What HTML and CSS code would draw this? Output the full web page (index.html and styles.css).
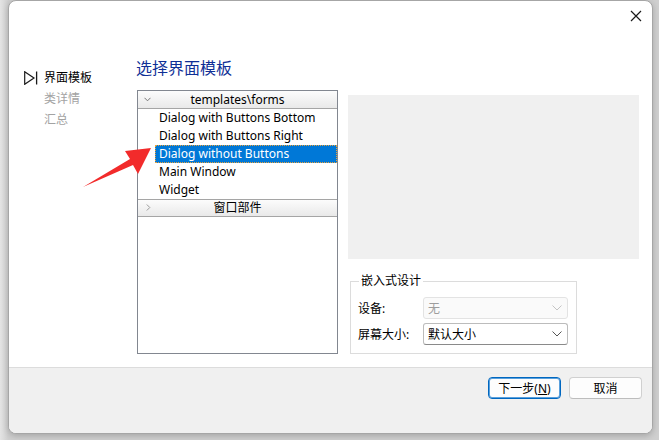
FILE: index.html
```html
<!DOCTYPE html>
<html lang="zh-CN">
<head>
  <meta charset="utf-8">
  <title>新建窗体</title>
  <link rel="stylesheet" href="styles.css">
</head>
<body>
  <div class="window">
    <div class="titlebar">
      <svg class="close" width="12" height="12" viewBox="0 0 12 12">
        <path d="M1 1 L11 11 M11 1 L1 11" stroke="#1a1a1a" stroke-width="1.2" fill="none"/>
      </svg>
    </div>

    <div class="main">
      <div class="nav">
        <div class="nav-item current">
          <svg width="14" height="14" viewBox="0 0 14 14">
            <path d="M0.7 0.7 L10 7 L0.7 13.3 Z" stroke="#1a1a1a" stroke-width="1.2" fill="none"/>
            <path d="M12.6 0.5 V13.5" stroke="#1a1a1a" stroke-width="1.3"/>
          </svg>
          <span>界面模板</span>
        </div>
        <div class="nav-item">类详情</div>
        <div class="nav-item">汇总</div>
      </div>

      <div class="page">
        <h1 class="page-title">选择界面模板</h1>
        <div class="content">
          <div class="tree">
            <div class="tree-header">
              <svg class="chev" width="7" height="5" viewBox="0 0 7 5"><path d="M0.5 0.8 L3.5 3.8 L6.5 0.8" stroke="#777" fill="none"/></svg>
              <span>templates\forms</span>
            </div>
            <div class="tree-item">Dialog with Buttons Bottom</div>
            <div class="tree-item">Dialog with Buttons Right</div>
            <div class="tree-item selected">Dialog without Buttons</div>
            <div class="tree-item">Main Window</div>
            <div class="tree-item">Widget</div>
            <div class="tree-header second">
              <svg class="chev" width="5" height="7" viewBox="0 0 5 7"><path d="M0.8 0.5 L3.8 3.5 L0.8 6.5" stroke="#999" fill="none"/></svg>
              <span>窗口部件</span>
            </div>
          </div>

          <div class="side">
            <div class="preview"></div>
            <div class="group">
              <div class="group-title">嵌入式设计</div>
              <div class="form-row">
                <span class="label">设备:</span>
                <div class="combo disabled">
                  <span>无</span>
                  <svg width="10" height="6" viewBox="0 0 10 6"><path d="M0.5 0.5 L5 5 L9.5 0.5" stroke="#c4c4c4" fill="none"/></svg>
                </div>
              </div>
              <div class="form-row">
                <span class="label">屏幕大小:</span>
                <div class="combo">
                  <span>默认大小</span>
                  <svg width="10" height="6" viewBox="0 0 10 6"><path d="M0.5 0.5 L5 5 L9.5 0.5" stroke="#555" fill="none"/></svg>
                </div>
              </div>
            </div>
          </div>
        </div>
      </div>
    </div>

    <div class="footer">
      <button class="btn default">下一步(<u>N</u>)</button>
      <button class="btn">取消</button>
    </div>

    <!-- annotation arrow pointing at the selected template -->
    <svg class="arrow" width="659" height="440" viewBox="0 0 659 440">
      <polygon points="74,186 121,158 116,150 142,147 129,173 124,164" fill="#f22b2b"/>
    </svg>
  </div>
</body>
</html>
```

FILE: styles.css
```css
body {
  margin: 0;
  height: 440px;
  overflow: hidden;
  background: linear-gradient(to right, #e4e4e4, #cfcfcf 8px, #cfcfcf);
  font-family: "Noto Sans", "Noto Sans CJK SC", sans-serif;
  font-size: 12px;
  color: #000;
}

.window {
  position: relative;
  box-sizing: border-box;
  width: 645px;
  height: 434px;
  margin-left: 8px;
  background: #fff;
  border: 1px solid #a6a6a6;
  border-radius: 8px;
  box-shadow: 0 2px 6px rgba(0, 0, 0, 0.2);
  display: flex;
  flex-direction: column;
  overflow: hidden;
}

.titlebar {
  height: 29px;
  display: flex;
  justify-content: flex-end;
  align-items: flex-start;
}

.close {
  margin: 9px 10px 0 0;
}

.main {
  display: flex;
  height: 337px;
}

.nav {
  width: 127px;
  flex: none;
  padding: 37px 0 0 15px;
  box-sizing: border-box;
}

.nav-item {
  height: 21px;
  line-height: 21px;
  padding-left: 20px;
  color: #a3a3a3;
}

.nav-item.current {
  display: flex;
  align-items: center;
  gap: 6px;
  padding-left: 0;
  color: #000;
}

.page {
  flex: 1;
}

.page-title {
  margin: 27px 0 0 0;
  height: 22px;
  line-height: 22px;
  font-size: 16px;
  font-weight: normal;
  color: #0f2f96;
}

.content {
  display: flex;
  margin-top: 11px;
  margin-left: 1px;
}

.tree {
  box-sizing: border-box;
  flex: none;
  width: 201px;
  height: 264px;
  border: 1px solid #828790;
}

.tree-header {
  position: relative;
  height: 17px;
  line-height: 17px;
  text-align: center;
  background: linear-gradient(#fcfcfc, #e9e9e9);
  border-bottom: 1px solid #a5a5a5;
}

.tree-header.second {
  border-top: 1px solid #a5a5a5;
  height: 16px;
  line-height: 16px;
}

.chev {
  position: absolute;
  left: 6px;
  top: 6px;
}

.tree-header.second .chev {
  left: 8px;
  top: 4px;
}

.tree-item {
  box-sizing: border-box;
  height: 18px;
  line-height: 16px;
  margin-left: 17px;
  padding-left: 3px;
  border: 1px solid transparent;
  white-space: nowrap;
}

.tree-item.selected {
  background: #0078d7;
  color: #fff;
  border: 1px dotted #e9a23b;
}

.side {
  margin-left: 10px;
}

.preview {
  width: 291px;
  height: 164px;
  margin-top: 5px;
  background: #f0f0f0;
}

.group {
  position: relative;
  box-sizing: border-box;
  width: 227px;
  height: 73px;
  margin: 22px 0 0 2px;
  padding: 15px 8px 0 7px;
  border: 1px solid #dcdcdc;
}

.group-title {
  position: absolute;
  top: -10px;
  left: 8px;
  padding: 0 2px;
  background: #fff;
  line-height: 18px;
}

.form-row {
  display: flex;
  align-items: center;
  margin-bottom: 4px;
}

.label {
  width: 65px;
}

.combo {
  box-sizing: border-box;
  width: 145px;
  height: 22px;
  display: flex;
  align-items: center;
  justify-content: space-between;
  padding: 0 5px 0 4px;
  background: #fff;
  border: 1px solid #bcbcbc;
  border-bottom-color: #8a8a8a;
  border-radius: 3px;
}

.combo.disabled {
  background: #fafafa;
  border-color: #e3e3e3;
  color: #9d9d9d;
}

.footer {
  flex: 1;
  display: flex;
  justify-content: flex-end;
  align-items: flex-start;
  gap: 8px;
  padding: 9px 10px 0 0;
  background: #f0f0f0;
  border-top: 1px solid #dcdcdc;
}

.btn {
  box-sizing: border-box;
  width: 73px;
  height: 22px;
  padding: 0;
  font-family: inherit;
  font-size: 12px;
  color: #000;
  background: #fdfdfd;
  border: 1px solid #d0d0d0;
  border-bottom-color: #bdbdbd;
  border-radius: 4px;
}

.btn.default {
  border: 1px solid #0067c0;
  box-shadow: inset 0 0 0 1px #5aa0dc;
}

.arrow {
  position: absolute;
  left: 0;
  top: 0;
  pointer-events: none;
}
```
